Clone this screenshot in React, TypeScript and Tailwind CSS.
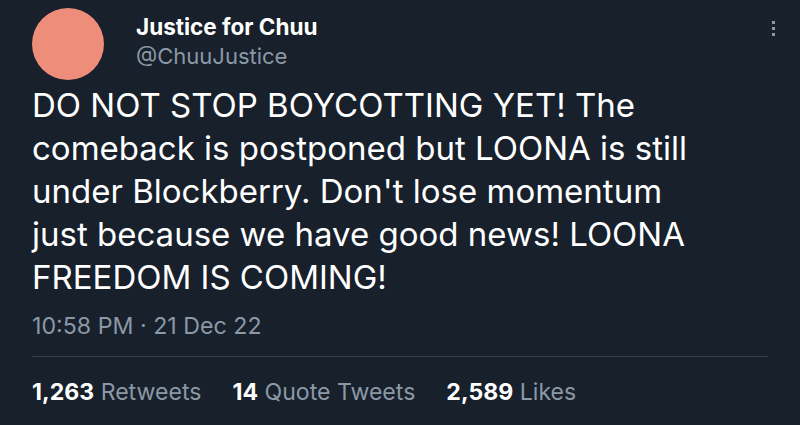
export default function App() {
  return (
    <div className="w-[800px] h-[425px] bg-[#17202b] overflow-hidden relative" style={{ fontFamily: "Inter, 'Liberation Sans', sans-serif" }}>
      <div className="absolute right-[25px] top-[21px] flex flex-col gap-[3px]">
        <div className="w-[3px] h-[3px] bg-[#8b98a5]" />
        <div className="w-[3px] h-[3px] bg-[#8b98a5]" />
        <div className="w-[3px] h-[3px] bg-[#8b98a5]" />
      </div>
      <div className="pl-[32px] pr-[32px] pt-[8px]">
        <div className="flex items-center gap-[32px]">
          <div className="w-[72px] h-[72px] rounded-full bg-[#ee8d7a]" />
          <div className="flex flex-col -mt-[5px]">
            <div className="text-[22.5px] font-bold text-white leading-[26px]">Justice for Chuu</div>
            <div className="text-[22px] text-[#8b98a5] leading-[26px] mt-[3px]">@ChuuJustice</div>
          </div>
        </div>
        <div className="mt-[4px] text-[33px] leading-[43px] text-white">
          DO NOT STOP BOYCOTTING YET! The<br />
          comeback is postponed but LOONA is still<br />
          under Blockberry. Don't lose momentum<br />
          just because we have good news! LOONA<br />
          FREEDOM IS COMING!
        </div>
        <div className="mt-[14px] text-[23.2px] text-[#8b98a5] leading-[26px]">10:58 PM · 21 Dec 22</div>
        <div className="mt-[17px] h-px bg-[#38444d]" />
        <div className="mt-[22px] flex gap-[31px] text-[23.1px] leading-[26px]">
          <span><span className="font-bold text-white">1,263</span> <span className="text-[#8b98a5]">Retweets</span></span>
          <span><span className="font-bold text-white">14</span> <span className="text-[#8b98a5]">Quote Tweets</span></span>
          <span><span className="font-bold text-white">2,589</span> <span className="text-[#8b98a5]">Likes</span></span>
        </div>
      </div>
    </div>
  );
}
